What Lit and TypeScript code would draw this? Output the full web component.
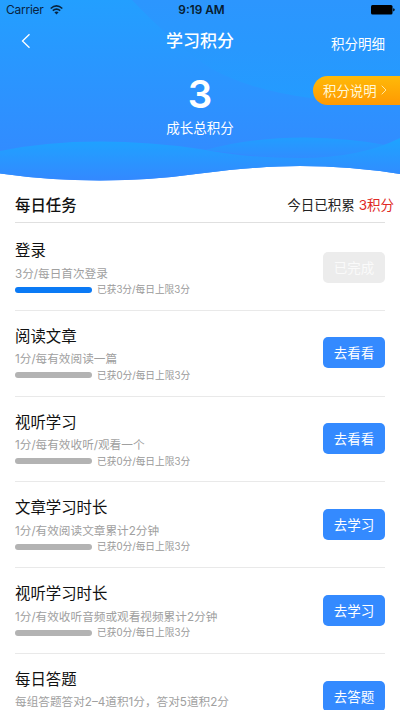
import { LitElement, html, css, svg } from "lit";
import { customElement, property } from "lit/decorators.js";
import { classMap } from "lit/directives/class-map.js";

interface Task {
  title: string;
  rule: string;
  earned: number;
  limit: number;
  action: string;
  done?: boolean;
}

const TASKS: Task[] = [
  { title: "登录", rule: "3分/每日首次登录", earned: 3, limit: 3, action: "已完成", done: true },
  { title: "阅读文章", rule: "1分/每有效阅读一篇", earned: 0, limit: 3, action: "去看看" },
  { title: "视听学习", rule: "1分/每有效收听/观看一个", earned: 0, limit: 3, action: "去看看" },
  { title: "文章学习时长", rule: "1分/有效阅读文章累计2分钟", earned: 0, limit: 3, action: "去学习" },
  { title: "视听学习时长", rule: "1分/有效收听音频或观看视频累计2分钟", earned: 0, limit: 3, action: "去学习" },
  { title: "每日答题", rule: "每组答题答对2–4道积1分，答对5道积2分", earned: -1, limit: 0, action: "去答题" },
];

const waves = svg`
  <defs>
    <linearGradient id="sky" gradientUnits="userSpaceOnUse" x1="0" y1="0" x2="0" y2="165">
      <stop offset="0" stop-color="#239fff"/><stop offset="1" stop-color="#338aff"/>
    </linearGradient>
    <linearGradient id="shade" gradientUnits="userSpaceOnUse" x1="0" y1="0" x2="0" y2="98">
      <stop offset="0" stop-color="#2c96fe"/><stop offset="0.500" stop-color="#2898fe"/><stop offset="1" stop-color="#249bff"/>
    </linearGradient>
    <linearGradient id="crest" gradientUnits="userSpaceOnUse" x1="0" y1="141" x2="0" y2="181">
      <stop offset="0" stop-color="#1fa2ff"/><stop offset="1" stop-color="#3488ff"/>
    </linearGradient>
    <linearGradient id="hill" gradientUnits="userSpaceOnUse" x1="0" y1="137" x2="0" y2="159">
      <stop offset="0" stop-color="#219eff"/><stop offset="1" stop-color="#318cff"/>
    </linearGradient>
  </defs>
  <path fill="url(#sky)" d="M0 0H400V174Q350 166 300 166Q260 166 200 173.500Q150 180.500 100 180.500Q50 180.500 0 173.500Z"/>
  <path fill="url(#shade)" d="M132 0H400V95Q355 101 310 98Q250 90 212 69Q178 48 132 0Z"/>
  <path fill="url(#hill)" d="M205 150Q250 137.500 305 137.500Q350 138 385 145L355 156L290 159Z"/>
  <path fill="url(#crest)" d="M0 151Q45 141.500 100 141.500Q150 141.500 200 149Q245 158 300 158Q360 158 400 138V174Q350 166 300 166Q260 166 200 173.500Q150 180.500 100 180.500Q50 180.500 0 173.500Z"/>`;

@customElement("score-header")
export class ScoreHeader extends LitElement {
  static styles = css`
    :host { display: block; position: relative; height: 185px; color: #fff; }
    .waves { position: absolute; inset: 0; width: 400px; height: 185px; }
    .content { position: relative; }
    .status {
      display: grid; grid-template-columns: 1fr auto 1fr; align-items: center;
      height: 20px; padding: 0 6px; color: #08243f;
      font: 12px/20px Inter, "Liberation Sans", sans-serif;
    }
    .carrier { display: flex; align-items: center; gap: 6px; letter-spacing: -0.250px; }
    .clock { font-weight: 600; font-size: 11.800px; color: #071c30; margin-left: 3px; }
    .battery { justify-self: end; display: block; margin-right: -1px; }
    .nav {
      display: grid; grid-template-columns: 1fr auto 1fr; align-items: center;
      height: 42px; padding: 0 15px 0 21px;
    }
    .back { display: block; }
    .title { font-size: 17px; font-weight: 500; line-height: 24px; margin: -2px 0 0 -6px; }
    .detail { justify-self: end; font-size: 13.500px; line-height: 20px; margin-top: 3px; }
    .total { display: flex; flex-direction: column; align-items: center; padding-top: 9px; }
    .points { font: 600 38.500px/46px Inter, sans-serif; }
    .caption { font-size: 13.500px; line-height: 20px; }
    .explain {
      position: absolute; right: 0; top: 76px; width: 87px; height: 29px;
      box-sizing: border-box; padding: 0 0 2px 10px; display: flex; align-items: center; gap: 4px;
      border-radius: 15px 0 0 15px; font-size: 13.400px; line-height: 20px;
      background: linear-gradient(#ffba08, #ff9902);
      color: #fff8d8;
    }
    .more { margin-top: 1px; }
  `;
  @property({ type: Number }) points = 0;

  render() {
    return html`
      <svg class="waves" viewBox="0 0 400 185">${waves}</svg>
      <div class="content">
        <div class="status">
          <span class="carrier">Carrier
            <svg width="13" height="10" viewBox="0 0 13 10">
              <g fill="none" stroke="#08243f" stroke-width="1.600">
                <path d="M.7 3.500Q6.500-1.700 12.300 3.500"/>
                <path d="M2.800 5.700Q6.500 2.400 10.200 5.700"/>
              </g>
              <path fill="#08243f" d="M4.400 7.300Q6.500 5.600 8.600 7.300L6.500 9.500Z"/>
            </svg>
          </span>
          <span class="clock">9:19 AM</span>
          <svg class="battery" width="24" height="10" viewBox="0 0 24 10">
            <rect width="21.500" height="9.500" rx="1.500" fill="#000"/>
            <path d="M22.200 3.200Q23.700 3.500 23.700 4.800T22.200 6.400Z" fill="#000"/>
          </svg>
        </div>
        <div class="nav">
          <svg class="back" width="10" height="16" viewBox="0 0 10 16">
            <path d="M8.500 1.200L1.500 8L8.500 14.800" fill="none" stroke="#fff" stroke-width="1.300"/>
          </svg>
          <span class="title">学习积分</span>
          <span class="detail">积分明细</span>
        </div>
        <div class="total">
          <span class="points">${this.points}</span>
          <span class="caption">成长总积分</span>
        </div>
      </div>
      <div class="explain">积分说明
        <svg class="more" width="6" height="10" viewBox="0 0 6 10"><path d="M.7.7L5 5L.7 9.300" fill="none" stroke="#ffe7a0" stroke-width="1"/></svg>
      </div>`;
  }
}

@customElement("task-row")
export class TaskRow extends LitElement {
  static styles = css`
    :host {
      display: flex; justify-content: space-between; height: 85.800px; box-sizing: border-box;
      border-bottom: 1px solid #e9e9e9;
    }
    .info { padding-top: 13px; white-space: nowrap; }
    .title { font-size: 15.400px; line-height: 23px; color: #111; }
    .rule {
      font-family: Inter, "Noto Sans CJK SC", sans-serif;
      font-size: 11.650px; line-height: 18px; margin-top: 3.500px; color: #a0a0a0;
    }
    .progress { display: flex; align-items: center; gap: 5px; height: 14px; }
    .bar { width: 77px; height: 6px; border-radius: 3px; background: #b3b3b3; }
    .bar.filled { background: #0b7af5; }
    .amount {
      font-family: Inter, "Noto Sans CJK SC", sans-serif;
      font-size: 9.700px; line-height: 14px; padding-top: 1px; color: #999;
    }
    .action {
      width: 62px; height: 31px; margin-top: 26.700px; border-radius: 5px;
      background: #348aff; color: #fff; font-size: 13.500px; line-height: 30px; text-align: center;
    }
    .action.done { background: #ececec; color: #fafafa; }
  `;
  @property({ attribute: false }) task!: Task;

  render() {
    const t = this.task;
    return html`
      <div class="info">
        <div class="title">${t.title}</div>
        <div class="rule">${t.rule}</div>
        ${t.limit > 0
          ? html`<div class="progress">
              <div class=${classMap({ bar: true, filled: t.earned > 0 })}></div>
              <span class="amount">已获${t.earned}分/每日上限${t.limit}分</span>
            </div>`
          : null}
      </div>
      <div class=${classMap({ action: true, done: !!t.done })}>${t.action}</div>`;
  }
}

@customElement("app-root")
export class AppRoot extends LitElement {
  static styles = css`
    :host {
      display: block; height: 710px; overflow: hidden; background: #fff;
      font-family: "Noto Sans CJK SC", sans-serif;
    }
    .heading {
      display: flex; justify-content: space-between; align-items: center;
      margin-left: 15px; padding-right: 6px; height: 37px; padding-top: 1px; box-sizing: border-box;
    }
    .section { font-size: 15.400px; font-weight: 500; color: #111; }
    .today { font-size: 13.500px; color: #222; }
    .sum { font-family: Inter, "Noto Sans CJK SC", sans-serif; color: #e02a25; margin-left: 4px; }
    .tasks { margin: 0 15px; padding-top: 2px; border-top: 1px solid #e0e0e0; }
  `;

  render() {
    return html`
      <score-header .points=${3}></score-header>
      <div class="heading">
        <span class="section">每日任务</span>
        <span class="today">今日已积累<span class="sum">3积分</span></span>
      </div>
      <div class="tasks">${TASKS.map((task) => html`<task-row .task=${task}></task-row>`)}</div>`;
  }
}
